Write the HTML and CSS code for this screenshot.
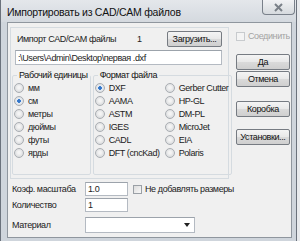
FILE: index.html
```html
<!DOCTYPE html>
<html lang="ru">
<head>
    <meta charset="UTF-8">
    <title>Импортировать из CAD/CAM файлов</title>
    <link rel="stylesheet" href="styles.css">
</head>
<body>
    <div class="window">
        <!-- Title bar -->
        <div class="titlebar">
            <span class="title">Импортировать из CAD/CAM файлов</span>
            <div class="close">
                <svg width="11" height="9" viewBox="0 0 11 9">
                    <path d="M2 1 L9 8 M9 1 L2 8" stroke="#7a8088" stroke-width="2" fill="none"/>
                </svg>
            </div>
        </div>

        <div class="client">
            <div class="top">
                <div class="panel">
                    <div class="import-row">
                        <span class="import-label">Импорт CAD/CAM файлы</span>
                        <span class="import-count">1</span>
                        <div class="btn btn-load">Загрузить...</div>
                    </div>
                    <div class="edit path">:\Users\Admin\Desktop\первая .dxf</div>

                    <div class="groups">
                        <fieldset class="group units">
                            <legend>Рабочий единицы</legend>
                            <div class="opt"><span class="radio"></span>мм</div>
                            <div class="opt"><span class="radio on"></span>см</div>
                            <div class="opt"><span class="radio"></span>метры</div>
                            <div class="opt"><span class="radio"></span>дюймы</div>
                            <div class="opt"><span class="radio"></span>футы</div>
                            <div class="opt"><span class="radio"></span>ярды</div>
                        </fieldset>
                        <fieldset class="group formats">
                            <legend>Формат файла</legend>
                            <div class="format-grid">
                                <div class="opt"><span class="radio on"></span>DXF</div>
                                <div class="opt"><span class="radio"></span>Gerber Cutter</div>
                                <div class="opt"><span class="radio"></span>AAMA</div>
                                <div class="opt"><span class="radio"></span>HP-GL</div>
                                <div class="opt"><span class="radio"></span>ASTM</div>
                                <div class="opt"><span class="radio"></span>DM-PL</div>
                                <div class="opt"><span class="radio"></span>IGES</div>
                                <div class="opt"><span class="radio"></span>MicroJet</div>
                                <div class="opt"><span class="radio"></span>CADL</div>
                                <div class="opt"><span class="radio"></span>EIA</div>
                                <div class="opt"><span class="radio"></span>DFT (cncKad)</div>
                                <div class="opt"><span class="radio"></span>Polaris</div>
                            </div>
                        </fieldset>
                    </div>
                </div>

                <!-- Buttons on the right -->
                <div class="side">
                    <div class="check-row disabled"><span class="checkbox"></span>Соединить</div>
                    <div class="btn btn-yes">Да</div>
                    <div class="btn btn-cancel">Отмена</div>
                    <div class="btn btn-box">Коробка</div>
                    <div class="btn btn-setup">Установки...</div>
                </div>
            </div>

            <div class="fields">
                <div class="field scale">
                    <span class="field-label">Коэф. масштаба</span>
                    <div class="edit small">1.0</div>
                    <div class="check-row"><span class="checkbox"></span>Не добавлять размеры</div>
                </div>
                <div class="field count">
                    <span class="field-label">Количество</span>
                    <div class="edit small">1</div>
                </div>
                <div class="field material">
                    <span class="field-label">Материал</span>
                    <div class="edit combo"><span class="arrow"></span></div>
                </div>
            </div>
        </div>
    </div>
</body>
</html>
```

FILE: styles.css
```css
body {
    margin: 0;
    font-family: 'Liberation Sans', Arial, sans-serif;
    font-size: 9px;
    letter-spacing: -0.4px;
    color: #222;
    background: #e8eaed;
    white-space: nowrap;
}

.window {
    width: 297px;
    height: 241px;
    box-sizing: border-box;
    background: #cfd5dc;
    border-left: 1px solid #6b727c;
    border-right: 1px solid #6b727c;
    display: flex;
    flex-direction: column;
}

.titlebar {
    height: 22px;
    flex-shrink: 0;
    display: flex;
    align-items: flex-start;
    padding-left: 6px;
    background: linear-gradient(#e4e7eb, #d4d9df);
}

.title {
    margin-top: 6px;
    font-size: 10.5px;
    letter-spacing: -0.25px;
    color: #111;
}

.close {
    margin-left: auto;
    margin-right: 1px;
    width: 33px;
    height: 15px;
    box-sizing: border-box;
    border: 1px solid #79808a;
    border-top: none;
    border-radius: 0 0 4px 4px;
    background: linear-gradient(#f1f2f4, #d6dade);
    display: flex;
    align-items: center;
    justify-content: center;
}

.client {
    flex: 1;
    margin: 0 4px 3px 6px;
    padding: 4px 2px 0 2px;
    background: #f0f0f0;
    border: 1px solid #8f969e;
}

.top {
    display: flex;
}

.panel {
    width: 219px;
    height: 152px;
    box-sizing: border-box;
    border: 1px solid #d5dbe0;
    padding-top: 3px;
}

.import-row {
    display: flex;
    align-items: center;
    height: 16px;
    padding-left: 6px;
}

.import-label {
    width: 120px;
}

.import-count {
    width: 30px;
}

.btn {
    height: 16px;
    box-sizing: border-box;
    border: 1px solid #767b82;
    border-radius: 2px;
    background: linear-gradient(#f4f4f4 0%, #e8e8e8 50%, #dadada 51%, #cfcfcf 100%);
    display: flex;
    align-items: center;
    justify-content: center;
    color: #111;
}

.btn-load {
    width: 55px;
}

.edit {
    box-sizing: border-box;
    background: #fff;
    border: 1px solid #b4bac2;
    border-top-color: #9ca3ab;
    display: flex;
    align-items: center;
    padding-left: 2px;
}

.path {
    width: 207px;
    height: 15px;
    margin: 3px 0 0 4px;
}

.groups {
    display: flex;
    margin-top: 4px;
}

.group {
    margin: 0;
    padding: 0 0 0 1px;
    height: 106px;
    box-sizing: border-box;
    border: 1px solid #d5dbe0;
    border-radius: 2px;
}

.group legend {
    padding: 0 2px;
    margin-left: 3px;
    line-height: 12px;
    color: #111;
}

.units {
    width: 75px;
    margin-left: 1px;
}

.formats {
    width: 137px;
    margin-left: 2px;
}

.format-grid {
    display: grid;
    grid-template-columns: 70px 66px;
}

.opt {
    height: 13px;
    display: flex;
    align-items: center;
    gap: 4px;
}

.radio {
    width: 10px;
    height: 10px;
    box-sizing: border-box;
    border-radius: 50%;
    border: 1px solid #a9adb2;
    background: radial-gradient(circle at 50% 45%, #f4f4f4 20%, #d8dadc 80%);
    flex-shrink: 0;
}

.radio.on {
    background: radial-gradient(circle, #2e6fc0 0, #3a7dd0 28%, #e9eef4 38%, #d8dadc 85%);
}

.side {
    margin-left: 7px;
    width: 54px;
    display: flex;
    flex-direction: column;
}

.check-row {
    display: flex;
    align-items: center;
    gap: 3px;
}

.side .check-row {
    margin-top: 4px;
    height: 10px;
}

.disabled {
    color: #a3a3a3;
}

.checkbox {
    width: 9px;
    height: 9px;
    box-sizing: border-box;
    border: 1px solid #9aa0a6;
    background: linear-gradient(135deg, #dcdcdc, #f8f8f8);
    flex-shrink: 0;
}

.disabled .checkbox {
    border-color: #c8cbce;
    background: #f4f4f4;
}

.btn-yes {
    margin-top: 13px;
}

.btn-cancel {
    margin-top: 1px;
}

.btn-box {
    margin-top: 14px;
}

.btn-setup {
    margin-top: 12px;
}

.fields {
    padding-left: 2px;
}

.field {
    display: flex;
    align-items: center;
}

.field-label {
    width: 73px;
}

.small {
    width: 43px;
    height: 14px;
}

.scale {
    margin-top: 3px;
}

.scale .check-row {
    margin-left: 5px;
}

.count {
    margin-top: 2px;
}

.material {
    margin-top: 5px;
}

.combo {
    width: 110px;
    height: 16px;
    justify-content: flex-end;
    padding-right: 4px;
}

.arrow {
    width: 0;
    height: 0;
    border-left: 3px solid transparent;
    border-right: 3px solid transparent;
    border-top: 4px solid #222;
}
```
